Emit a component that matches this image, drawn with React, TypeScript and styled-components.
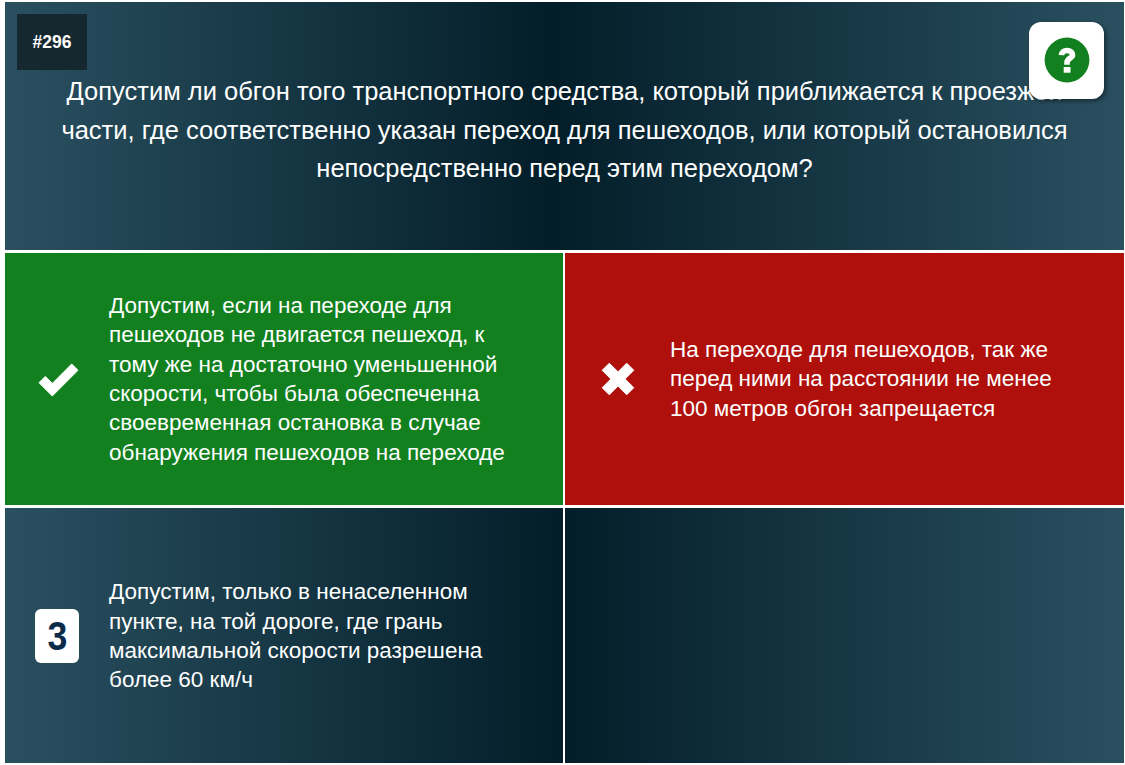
import React, { FC, ReactNode } from 'react';
import styled, { createGlobalStyle } from 'styled-components';

const GlobalStyle = createGlobalStyle`
    html, body {
        margin: 0;
        padding: 0;
        background: #fff;
    }
    body {
        font-family: "Liberation Sans", Arial, sans-serif;
    }
`;

type Status = 'correct' | 'wrong' | 'neutral';

interface AnswerProps {
    status: Status;
    marker?: ReactNode;
    side: 'left' | 'right';
    children?: ReactNode;
}

const CheckIcon: FC = () => (
    <GlyphSvg viewBox="0 0 48 48">
        <polygon points="6,27.7 12.3,21.4 19.3,28.4 38.7,9 45,15.3 19.3,41" />
    </GlyphSvg>
);

const CrossIcon: FC = () => (
    <GlyphSvg viewBox="0 0 48 48">
        <polygon points="24,16.9 32.7,8.2 39.8,15.3 31.1,24 39.8,32.7 32.7,39.8 24,31.1 15.3,39.8 8.2,32.7 16.9,24 8.2,15.3 15.3,8.2" />
    </GlyphSvg>
);

const HelpIcon: FC = () => (
    <svg width="46" height="46" viewBox="0 0 46 46">
        <circle cx="23" cy="23" r="22.4" fill="#12801f" />
        <path
            d="M17.4 18.2C17.6 15 20 13.5 23 13.5C26.5 13.5 28.6 15.6 28.6 18.1C28.6 21 23 21.5 23 25.5V27.8"
            fill="none"
            stroke="#fff"
            strokeWidth="5.6"
        />
        <rect x="19.7" y="30" width="6.8" height="5.7" fill="#fff" />
    </svg>
);

const Answer: FC<AnswerProps> = ({ status, marker, side, children }) => (
    <AnswerCell $status={status} $side={side}>
        {marker && <MarkerSlot $side={side}>{marker}</MarkerSlot>}
        {children && <AnswerText $side={side}>{children}</AnswerText>}
    </AnswerCell>
);

const App: FC = () => (
    <Page>
        <GlobalStyle />
        <Question>
            <NumberBadge>#296</NumberBadge>
            <QuestionText>
                Допустим ли обгон того транспортного средства, который приближается к проезжей части, где
                соответственно указан переход для пешеходов, или который остановился непосредственно перед
                этим переходом?
            </QuestionText>
            <HelpButton>
                <HelpIcon />
            </HelpButton>
        </Question>
        <Answers>
            <Answer status="correct" side="left" marker={<CheckIcon />}>
                Допустим, если на переходе для пешеходов не двигается пешеход, к тому же на достаточно
                уменьшенной скорости, чтобы была обеспеченна своевременная остановка в случае обнаружения
                пешеходов на переходе
            </Answer>
            <Answer status="wrong" side="right" marker={<CrossIcon />}>
                На переходе для пешеходов, так же перед ними на расстоянии не менее 100 метров обгон
                запрещается
            </Answer>
            <Answer status="neutral" side="left" marker={<NumberTile><TileDigit>3</TileDigit></NumberTile>}>
                Допустим, только в ненаселенном пункте, на той дороге, где грань максимальной скорости
                разрешена более 60 км/ч
            </Answer>
            <Answer status="neutral" side="right" />
        </Answers>
    </Page>
);

const Page = styled.div`
    box-sizing: border-box;
    width: 1125px;
    height: 765px;
    padding: 2px 1px 2px 5px;
    display: flex;
    flex-direction: column;
    gap: 3px;
    overflow: hidden;
`;

const Question = styled.div`
    position: relative;
    height: 248px;
    flex: none;
    background: linear-gradient(90deg, #2a5060 0%, #031e29 49%, #2a5060 100%);
    color: #fff;
`;

const NumberBadge = styled.div`
    position: absolute;
    left: 12px;
    top: 12px;
    width: 70px;
    height: 56px;
    display: flex;
    align-items: center;
    justify-content: center;
    background: #16282f;
    font-size: 17.5px;
    font-weight: 700;
    color: #fff;
`;

const HelpButton = styled.div`
    position: absolute;
    right: 20px;
    top: 20px;
    width: 75px;
    height: 77px;
    padding-bottom: 2px;
    box-sizing: border-box;
    display: flex;
    align-items: center;
    justify-content: center;
    background: #fff;
    border-radius: 12px;
    box-shadow: 2px 2px 4px rgba(0, 0, 0, 0.45);
`;

const QuestionText = styled.div`
    padding: 70px 50px 0;
    font-size: 25.5px;
    line-height: 38.6px;
    text-align: center;
`;

const Answers = styled.div`
    flex: 1;
    display: grid;
    grid-template-columns: 558px 559px;
    grid-template-rows: 252px 255px;
    column-gap: 2px;
    row-gap: 3px;
`;

const AnswerCell = styled.div<{ $status: Status; $side: 'left' | 'right' }>`
    display: flex;
    align-items: center;
    box-sizing: border-box;
    padding-top: ${(p) => (p.$status === 'neutral' ? '1px' : '0')};
    color: #fff;
    background: ${(p) =>
        p.$status === 'correct'
            ? '#12801f'
            : p.$status === 'wrong'
            ? '#b0100b'
            : p.$side === 'left'
            ? 'linear-gradient(90deg, #2a5060 0%, #031e29 100%)'
            : 'linear-gradient(90deg, #031e29 0%, #2a5060 100%)'};
`;

const MarkerSlot = styled.div<{ $side: 'left' | 'right' }>`
    flex: none;
    width: ${(p) => (p.$side === 'left' ? '104px' : '105px')};
    display: flex;
    justify-content: center;
`;

const GlyphSvg = styled.svg`
    width: 48px;
    height: 48px;
    fill: #fff;
    stroke: #fff;
    stroke-width: 1;
    stroke-linejoin: round;
`;

const AnswerText = styled.div<{ $side: 'left' | 'right' }>`
    width: ${(p) => (p.$side === 'left' ? '405px' : '395px')};
    font-size: 22.5px;
    line-height: 29.3px;
`;

const NumberTile = styled.div`
    width: 44px;
    height: 54px;
    display: flex;
    align-items: center;
    justify-content: center;
    background: #fff;
    border-radius: 6px;
    color: #0a2c4a;
`;

const TileDigit = styled.span`
    display: block;
    font-size: 41px;
    font-weight: 700;
    transform: scaleX(0.87);
`;

export default App;
